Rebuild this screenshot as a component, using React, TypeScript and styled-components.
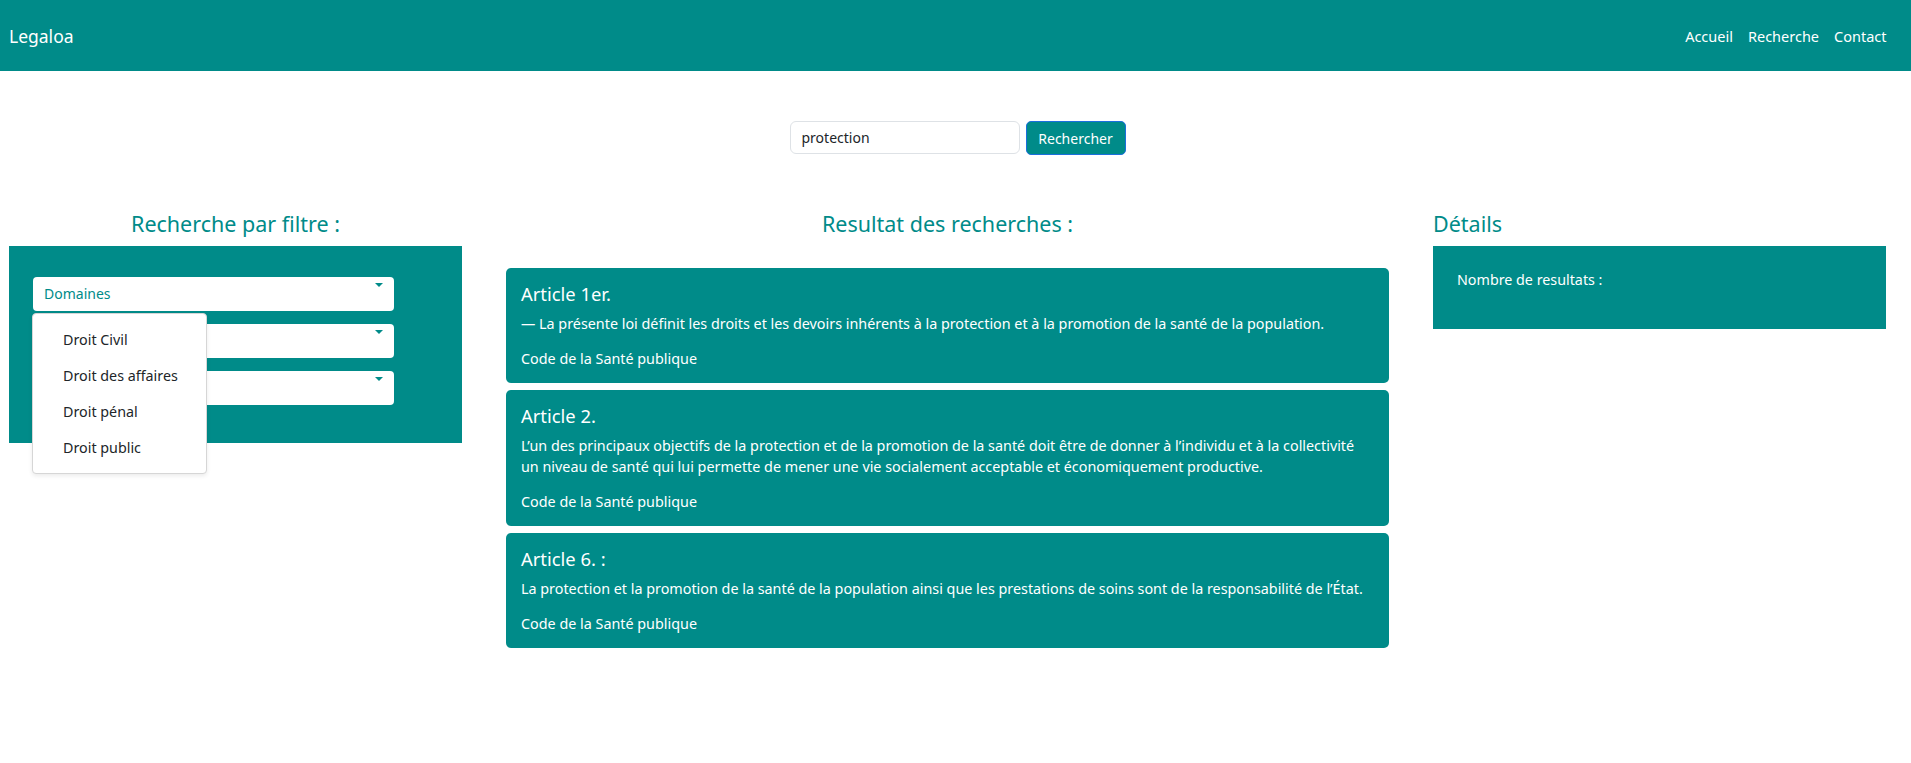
import React from "react";
import styled, { createGlobalStyle } from "styled-components";

const TEAL = "#008b89";

const GlobalStyle = createGlobalStyle`
  * { box-sizing: border-box; }
  body {
    margin: 0;
    font-family: "Noto Sans", "Open Sans", sans-serif;
    color: #212529;
    background: #fff;
  }
`;

const Navbar = styled.nav`
  height: 71px;
  background: ${TEAL};
  display: flex;
  align-items: center;
  justify-content: space-between;
  padding: 0 17px 0 9px;
`;

const Brand = styled.a`
  color: #fff;
  font-size: 17.5px;
  text-decoration: none;
`;

const NavLinks = styled.div`
  display: flex;
`;

const NavLink = styled.a`
  color: #fff;
  font-size: 14.5px;
  padding: 0 7.5px;
  text-decoration: none;
`;

const SearchRow = styled.form`
  display: flex;
  justify-content: center;
  gap: 6px;
  margin: 50px 0 0 4px;
`;

const SearchInput = styled.input`
  width: 230px;
  height: 33px;
  border: 1px solid #dee2e6;
  border-radius: 6px;
  padding: 0 11px;
  font-family: inherit;
  font-size: 14px;
  color: #212529;
  outline: none;
`;

const SearchButton = styled.button`
  width: 100px;
  height: 34px;
  background: ${TEAL};
  border: 1px solid #1b6fdc;
  border-radius: 5px;
  color: #fff;
  font-family: inherit;
  font-size: 14px;
  padding: 0;
`;

const Columns = styled.div`
  display: grid;
  grid-template-columns: 453px 883px 453px;
  column-gap: 44px;
  padding-left: 9px;
  margin-top: 56px;
  align-items: start;
`;

const Column = styled.section``;

const Heading = styled.h2<{ $align?: string }>`
  margin: 0 0 9.5px;
  font-size: 21.5px;
  font-weight: 400;
  line-height: 25px;
  color: ${TEAL};
  text-align: ${(p) => p.$align || "center"};
`;

const FilterPanel = styled.div`
  background: ${TEAL};
  height: 197px;
  padding: 31px 0 0 24px;
  display: flex;
  flex-direction: column;
  gap: 13px;
`;

const SelectWrap = styled.div`
  position: relative;
  width: 361px;
`;

const SelectBox = styled.div`
  height: 34px;
  background: #fff;
  border-radius: 4px;
  padding: 0 11px;
  display: flex;
  align-items: center;
  font-size: 14px;
  color: ${TEAL};
`;

const Caret = styled.span`
  position: absolute;
  right: 11px;
  top: 6px;
  width: 0;
  height: 0;
  border-left: 4px solid transparent;
  border-right: 4px solid transparent;
  border-top: 4px solid ${TEAL};
`;

const Menu = styled.ul`
  position: absolute;
  left: -1px;
  top: 36px;
  width: 175px;
  margin: 0;
  padding: 8px 0 7px;
  list-style: none;
  background: #fff;
  border: 1px solid #d6d6d6;
  border-radius: 4px;
  box-shadow: 0 2px 4px rgba(0, 0, 0, 0.08);
  z-index: 5;
`;

const MenuItem = styled.li`
  height: 36px;
  line-height: 36px;
  padding-left: 30px;
  font-size: 14.3px;
  color: #212529;
`;

const CardList = styled.div`
  margin-top: 32px;
  display: flex;
  flex-direction: column;
  gap: 7.5px;
`;

const Card = styled.article`
  background: ${TEAL};
  border-radius: 5px;
  padding: 14px 20px 13.5px 15px;
  color: #fff;
`;

const CardTitle = styled.h3`
  margin: 0 0 8px;
  font-size: 18.4px;
  font-weight: 400;
  line-height: 23px;
`;

const CardText = styled.p`
  margin: 0 0 14px;
  font-size: 14.35px;
  line-height: 21px;
`;

const CardSource = styled.p`
  margin: 0;
  font-size: 14.35px;
  line-height: 21px;
`;

const DetailsPanel = styled.div`
  background: ${TEAL};
  height: 83px;
  padding: 23px 24px;
  color: #fff;
  font-size: 14.3px;
  line-height: 21px;
`;

const articles = [
  {
    title: "Article 1er.",
    text: "— La présente loi définit les droits et les devoirs inhérents à la protection et à la promotion de la santé de la population.",
  },
  {
    title: "Article 2.",
    text: "L’un des principaux objectifs de la protection et de la promotion de la santé doit être de donner à l’individu et à la collectivité un niveau de santé qui lui permette de mener une vie socialement acceptable et économiquement productive.",
  },
  {
    title: "Article 6. :",
    text: "La protection et la promotion de la santé de la population ainsi que les prestations de soins sont de la responsabilité de l’État.",
  },
];

export default function App() {
  return (
    <>
      <GlobalStyle />
      <Navbar>
        <Brand href="#">Legaloa</Brand>
        <NavLinks>
          <NavLink href="#">Accueil</NavLink>
          <NavLink href="#">Recherche</NavLink>
          <NavLink href="#">Contact</NavLink>
        </NavLinks>
      </Navbar>
      <SearchRow onSubmit={(e) => e.preventDefault()}>
        <SearchInput defaultValue="protection" />
        <SearchButton type="submit">Rechercher</SearchButton>
      </SearchRow>
      <Columns>
        <Column>
          <Heading>Recherche par filtre :</Heading>
          <FilterPanel>
            <SelectWrap>
              <SelectBox>Domaines</SelectBox>
              <Caret />
              <Menu>
                <MenuItem>Droit Civil</MenuItem>
                <MenuItem>Droit des affaires</MenuItem>
                <MenuItem>Droit pénal</MenuItem>
                <MenuItem>Droit public</MenuItem>
              </Menu>
            </SelectWrap>
            <SelectWrap>
              <SelectBox />
              <Caret />
            </SelectWrap>
            <SelectWrap>
              <SelectBox />
              <Caret />
            </SelectWrap>
          </FilterPanel>
        </Column>
        <Column>
          <Heading>Resultat des recherches :</Heading>
          <CardList>
            {articles.map((a) => (
              <Card key={a.title}>
                <CardTitle>{a.title}</CardTitle>
                <CardText>{a.text}</CardText>
                <CardSource>Code de la Santé publique</CardSource>
              </Card>
            ))}
          </CardList>
        </Column>
        <Column>
          <Heading $align="left">Détails</Heading>
          <DetailsPanel>Nombre de resultats :</DetailsPanel>
        </Column>
      </Columns>
    </>
  );
}
